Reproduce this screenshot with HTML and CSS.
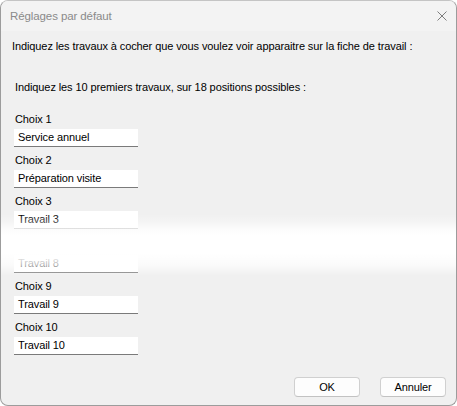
FILE: index.html
```html
<!DOCTYPE html>
<html lang="fr">
<head>
<meta charset="utf-8">
<title>Réglages par défaut</title>
<link rel="stylesheet" href="styles.css">
</head>
<body>
<div class="window">
  <div class="titlebar">
    <span class="title">Réglages par défaut</span>
    <svg class="close" width="10" height="10" viewBox="0 0 10 10"><path d="M0.5 0.5 L9.5 9.5 M9.5 0.5 L0.5 9.5" stroke="#7d7d7d" stroke-width="1" fill="none"/></svg>
  </div>
  <div class="content">
    <p class="intro">Indiquez les travaux à cocher que vous voulez voir apparaitre sur la fiche de travail :</p>
    <p class="sub">Indiquez les 10 premiers travaux, sur 18 positions possibles :</p>
    <div class="choices">
      <div class="choice"><div class="label">Choix 1</div><div class="field">Service annuel</div></div>
      <div class="choice"><div class="label">Choix 2</div><div class="field">Préparation visite</div></div>
      <div class="choice"><div class="label">Choix 3</div><div class="field">Travail 3</div></div>
      <div class="choice cut"><div class="label">Choix 8</div><div class="field">Travail 8</div></div>
      <div class="choice"><div class="label">Choix 9</div><div class="field">Travail 9</div></div>
      <div class="choice"><div class="label">Choix 10</div><div class="field">Travail 10</div></div>
    </div>
    <div class="buttons">
      <button class="btn">OK</button>
      <button class="btn">Annuler</button>
    </div>
  </div>
  <div class="fade"></div>
</div>
</body>
</html>
```
FILE: styles.css
```css
* { box-sizing: border-box; }
html, body { margin: 0; padding: 0; background: #ffffff; }
body { width: 457px; height: 406px; font-family: "Liberation Sans", Arial, sans-serif; font-size: 11px; letter-spacing: -0.1px; color: #000; }
.window {
  position: relative;
  width: 457px;
  height: 406px;
  border: 1px solid #9c9c9c;
  border-top-color: #c4c4c4;
  border-radius: 8px;
  overflow: hidden;
  background: #f0f0f0;
  display: flex;
  flex-direction: column;
}
.titlebar {
  height: 30px;
  flex: none;
  background: #f3f3f3;
  display: flex;
  align-items: center;
  justify-content: space-between;
  padding: 0 9px 0 9px;
}
.title { color: #8a8a8a; font-size: 11.5px; line-height: 15px; }
.close { display: block; }
.content {
  flex: 1;
  display: flex;
  flex-direction: column;
  padding: 8px 10px 8px 11px;
}
.intro { margin: 0; line-height: 15px; }
.sub { margin: 26px 0 0 3px; line-height: 15px; }
.choices { margin: 17px 0 0 2px; display: flex; flex-direction: column; }
.choice { display: flex; flex-direction: column; gap: 2px; margin-bottom: 6px; }
.choice.cut { margin-top: 3px; }
.label { line-height: 15px; padding-left: 1px; }
.field {
  width: 124px;
  height: 18px;
  background: #ffffff;
  border-bottom: 1px solid #7a7a7a;
  padding-left: 4px;
  line-height: 17px;
}
.buttons {
  margin-top: auto;
  display: flex;
  justify-content: flex-end;
  gap: 20px;
}
.btn {
  width: 66px;
  height: 20px;
  font-family: inherit;
  font-size: 11px;
  letter-spacing: -0.1px;
  color: #000;
  background: #fdfdfd;
  border: 1px solid #d0d0d0;
  border-bottom-color: #c2c2c2;
  border-radius: 4px;
  padding: 0;
}
.fade {
  position: absolute;
  left: -1px;
  right: -1px;
  top: 213px;
  height: 62px;
  background: linear-gradient(to bottom,
    rgba(255,255,255,0) 0px,
    rgba(255,255,255,0.3) 8px,
    rgba(255,255,255,0.8) 15px,
    #fff 21px,
    #fff 40px,
    rgba(255,255,255,0.7) 51px,
    rgba(255,255,255,0) 62px);
  pointer-events: none;
}
```
